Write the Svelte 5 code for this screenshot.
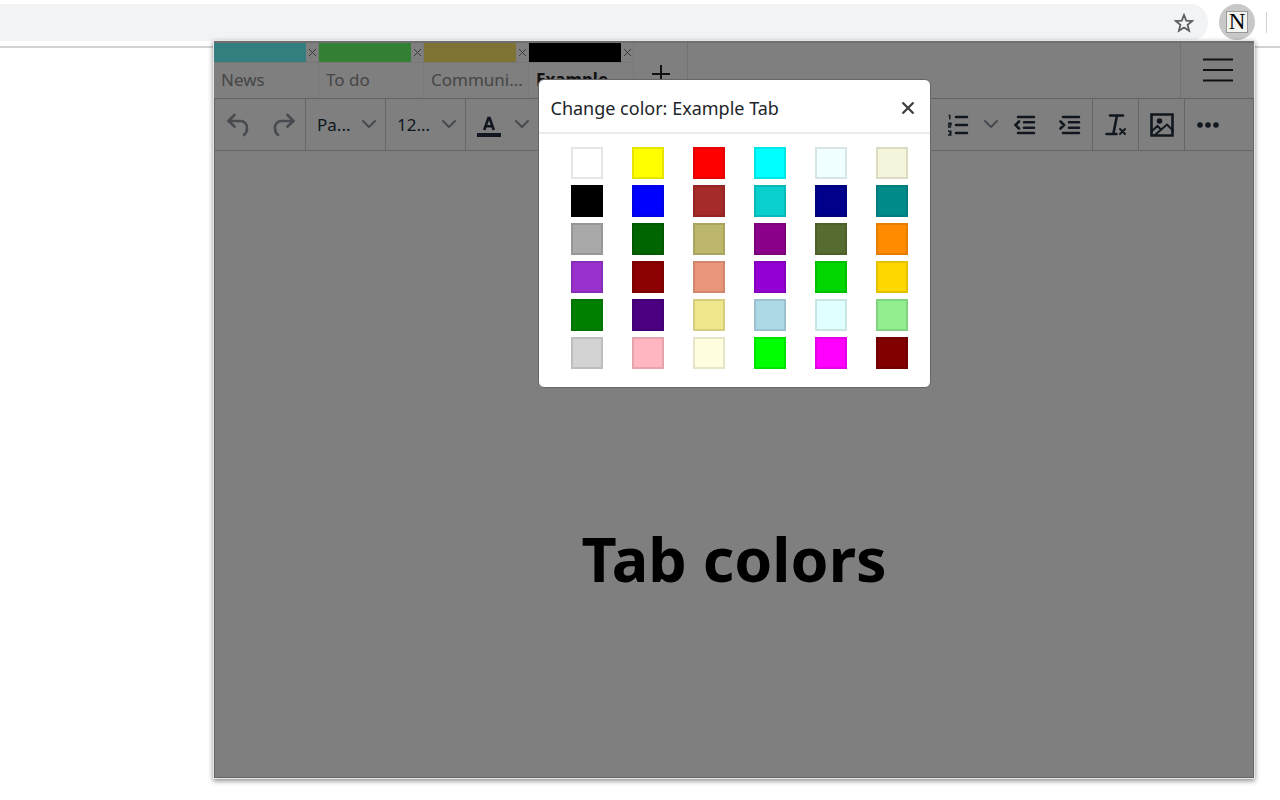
<script>
  let tabs = [
    { name: 'News', color: '#66ffff' },
    { name: 'To do', color: '#66ff66' },
    { name: 'Communi...', color: '#ffe666' },
    { name: 'Example', color: '#000000' }
  ];
  let active = 3;
  let modalOpen = true;

  const colors = [
    'white', 'yellow', 'red', 'cyan', 'azure', 'beige',
    'black', 'blue', 'brown', '#09cfcf', 'darkblue', 'darkcyan',
    'darkgray', 'darkgreen', 'darkkhaki', 'darkmagenta', 'darkolivegreen', 'darkorange',
    'darkorchid', 'darkred', 'darksalmon', 'darkviolet', '#00d600', 'gold',
    'green', 'indigo', 'khaki', 'lightblue', 'lightcyan', 'lightgreen',
    'lightgray', 'lightpink', 'lightyellow', 'lime', 'magenta', 'maroon'
  ];

  function pick(color) {
    tabs[active].color = color;
    modalOpen = false;
  }
</script>

<div class="page">
  <header class="browser">
    <div class="omnibox">
      <input aria-label="Address" type="text" />
      <button class="star" aria-label="Bookmark">
        <svg width="20" height="20" viewBox="0 0 20 20">
          <path d="M10 2l2.200 5.600 6 .4-4.600 3.900 1.500 5.900-5.100-3.300-5.100 3.300 1.500-5.900L1.800 8l6-.4z" fill="none" stroke="#5a5d61" stroke-width="1.800" />
        </svg>
      </button>
    </div>
    <button class="extension"><span>N</span></button>
    <div class="divider"></div>
  </header>

  <main class="popup">
    <nav class="tabs">
      {#each tabs as tab, i}
        <div class="tab" class:active={i === active}>
          <div class="strip">
            <div class="color" style="background: {tab.color}"></div>
            <button class="close" aria-label="Close tab">
              <svg width="9" height="9" viewBox="0 0 9 9"><path d="M1 1l7 7M8 1L1 8" /></svg>
            </button>
          </div>
          <button class="name" on:click={() => (active = i)}>{tab.name}</button>
        </div>
      {/each}
      <button class="add" aria-label="Add tab">
        <svg width="18" height="18" viewBox="0 0 18 18"><path d="M9 0v18M0 9h18" /></svg>
      </button>
      <button class="menu" aria-label="Menu">
        <svg width="30" height="24" viewBox="0 0 30 24"><path d="M0 1.500h30M0 12h30M0 22.500h30" /></svg>
      </button>
    </nav>

    <section class="editor">
      <div class="toolbar">
        <div class="group">
          <button class="tool muted" aria-label="Undo">
            <svg width="24" height="24" viewBox="0 0 24 24">
              <path d="M8.500 2L2.500 8l6 5.500M3 8h11a6.500 6.500 0 0 1 7 7.500q0 4-3 6.500" />
            </svg>
          </button>
          <button class="tool muted" aria-label="Redo">
            <svg width="24" height="24" viewBox="0 0 24 24">
              <path d="M16.500 2l6 6-6 5.500M22 8H11a6.500 6.500 0 0 0-7 7.500q0 4 3 6.500" />
            </svg>
          </button>
        </div>
        <div class="group drop">
          <select aria-label="Block format"><option>Pa...</option></select>
          <svg class="chevron" width="14" height="9" viewBox="0 0 14 9"><path d="M1 1l6 6 6-6" /></svg>
        </div>
        <div class="group drop">
          <select aria-label="Font size"><option>12...</option></select>
          <svg class="chevron" width="14" height="9" viewBox="0 0 14 9"><path d="M1 1l6 6 6-6" /></svg>
        </div>
        <div class="group colors">
          <button class="tool" aria-label="Text color">
            <svg width="24" height="24" viewBox="0 0 24 24">
              <path class="letter" d="M7.200 17L11.400 5h1.200l4.200 12M9 13.300h6" />
              <path class="solid" d="M0 20h24v4H0z" />
            </svg>
          </button>
          <button class="split" aria-label="Text color options">
            <svg class="chevron" width="14" height="9" viewBox="0 0 14 9"><path d="M1 1l6 6 6-6" /></svg>
          </button>
        </div>
        <div class="group lists">
          <button class="split" aria-label="Bullet list options">
            <svg class="chevron" width="14" height="9" viewBox="0 0 14 9"><path d="M1 1l6 6 6-6" /></svg>
          </button>
          <button class="tool" aria-label="Numbered list">
            <svg width="24" height="24" viewBox="0 0 24 24">
              <path class="bars" d="M10 4h11M10 12h11M10 20h11" />
              <path class="digits" d="M2.500 2.500h1.300v4M2 10.300h3v1.700H2.700v2H5.200M2 18.300h2.800v3.700H2M3 20.100h1.500" />
            </svg>
          </button>
          <button class="split" aria-label="Numbered list options">
            <svg class="chevron" width="14" height="9" viewBox="0 0 14 9"><path d="M1 1l6 6 6-6" /></svg>
          </button>
          <button class="tool" aria-label="Decrease indent">
            <svg width="24" height="24" viewBox="0 0 24 24">
              <path class="bars" d="M5 4h16M11 9.300h10M11 14.700h10M5 20h16M6 8.500L2.500 12 6 15.500" />
            </svg>
          </button>
          <button class="tool" aria-label="Increase indent">
            <svg width="24" height="24" viewBox="0 0 24 24">
              <path class="bars" d="M5 4h16M11 9.300h10M11 14.700h10M5 20h16M2.500 8.500L6 12l-3.500 3.500" />
            </svg>
          </button>
        </div>
        <div class="group">
          <button class="tool" aria-label="Clear formatting">
            <svg width="24" height="24" viewBox="0 0 24 24">
              <path class="bars" d="M6 2.500h13M13 2.500L9.500 20M2.500 21h10" />
              <path class="thin" d="M16 16l5 5M21 16l-5 5" />
            </svg>
          </button>
        </div>
        <div class="group">
          <button class="tool" aria-label="Image">
            <svg width="24" height="24" viewBox="0 0 24 24">
              <path class="bars" d="M1.500 1.500h21v21h-21z" />
              <circle class="solid" cx="9.500" cy="8" r="2.800" />
              <path class="thin" d="M2 18l5.500-5 3.500 3.500M5 22L17 11.500l6 6" />
            </svg>
          </button>
        </div>
        <div class="group">
          <button class="tool" aria-label="More">
            <svg width="24" height="24" viewBox="0 0 24 24">
              <circle class="solid" cx="4" cy="12" r="2.800" />
              <circle class="solid" cx="12" cy="12" r="2.800" />
              <circle class="solid" cx="20" cy="12" r="2.800" />
            </svg>
          </button>
        </div>
      </div>
      <h1>Tab colors</h1>
    </section>

    {#if modalOpen}
      <div class="overlay">
        <div class="modal" role="dialog" aria-labelledby="modal-title">
          <div class="modal-header">
            <h2 id="modal-title">Change color: Example Tab</h2>
            <button aria-label="Close" on:click={() => (modalOpen = false)}>
              <svg width="14" height="14" viewBox="0 0 14 14">
                <path d="M1.500 1.500l11 11M12.500 1.500l-11 11" fill="none" stroke="#404040" stroke-width="2.300" />
              </svg>
            </button>
          </div>
          <div class="swatches">
            {#each colors as color}
              <button aria-label={color} style="background-color: {color}" on:click={() => pick(color)}></button>
            {/each}
          </div>
        </div>
      </div>
    {/if}
  </main>
</div>

<style>
  :global(body) {
    background: white;
    font-family: 'Noto Sans', 'Open Sans', sans-serif;
  }

  * {
    box-sizing: border-box;
  }

  button, select, input {
    background: none;
    border: none;
    color: inherit;
    font: inherit;
    margin: 0;
    padding: 0;
  }

  button {
    align-items: center;
    cursor: pointer;
    display: flex;
    justify-content: center;
  }

  svg {
    display: block;
    flex: none;
  }

  .page {
    display: flex;
    flex-direction: column;
    min-height: 100vh;
  }

  .browser {
    align-items: flex-start;
    border-bottom: 2px solid #d2d2d2;
    display: flex;
    height: 48px;
    padding-top: 4px;
  }

  .omnibox {
    align-items: center;
    background: #f1f3f4;
    border-radius: 0 18px 18px 0;
    display: flex;
    flex: 1;
    height: 37px;
    padding-right: 14px;
  }

  .omnibox input {
    flex: 1;
    outline: none;
  }

  .extension {
    background: #c8c8c8;
    border-radius: 50%;
    height: 36px;
    margin: 0 11px;
    width: 36px;
  }

  .extension span {
    background: #f3f4ef;
    border: 1px solid #999;
    color: black;
    font-family: 'Liberation Serif', serif;
    font-size: 23px;
    height: 22px;
    line-height: 20px;
    width: 22px;
  }

  .divider {
    background: #d2d2d2;
    height: 21px;
    margin: 8px 13px 0 0;
    width: 1px;
  }

  .popup {
    border: 1px solid #e6e6e6;
    box-shadow: 0 2px 5px rgba(0, 0, 0, 0.45);
    background: white;
    display: flex;
    flex: 1;
    flex-direction: column;
    margin: -8px 25px 21px 213px;
    position: relative;
  }

  .tabs {
    border-bottom: 1px solid #c4c4c4;
    border-top: 2px solid #dedede;
    color: #222;
    display: flex;
    height: 58px;
  }

  .tab {
    border-right: 1px solid #f0f0f0;
    color: #8c8c8c;
    width: 105px;
  }

  .tab.active {
    color: #222;
    font-weight: bold;
  }

  .strip {
    border-bottom: 1px solid #eee;
    display: flex;
    height: 20px;
  }

  .color {
    flex: 1;
  }

  .close {
    width: 12px;
  }

  .close path {
    fill: none;
    stroke: #777;
    stroke-width: 1;
  }

  .name {
    font-size: 17px;
    height: 33px;
    justify-content: flex-start;
    padding-left: 7px;
    white-space: nowrap;
    width: 100%;
  }

  .add {
    border-right: 1px solid #e4e4e4;
    padding-top: 6px;
    width: 54px;
  }

  .menu {
    border-left: 1px solid #e4e4e4;
    margin-left: auto;
    padding-bottom: 2px;
    width: 74px;
  }

  .add path, .menu path {
    fill: none;
    stroke: #222;
    stroke-width: 2;
  }

  .editor {
    border: 1px solid #ccc;
    border-top: none;
    flex: 1;
  }

  .toolbar {
    border-bottom: 1px solid #ccc;
    color: #222f3e;
    display: flex;
    height: 52px;
  }

  .group {
    border-right: 1px solid #ccc;
    display: flex;
    flex: none;
  }

  .group:last-child {
    border-right: none;
    width: 68px;
  }

  .group.colors {
    border-right: none;
  }

  .group.lists {
    flex: 1;
    justify-content: flex-end;
  }

  .tool {
    width: 45px;
  }

  .tool path, .chevron path {
    fill: none;
    stroke: #222f3e;
    stroke-linecap: round;
    stroke-width: 3;
  }

  .tool .bars, .tool .letter {
    stroke-width: 2.6;
  }

  .tool .letter {
    stroke-linecap: butt;
  }

  .tool .thin {
    stroke-width: 2;
  }

  .tool .digits {
    stroke-linecap: butt;
    stroke-width: 1.4;
  }

  .tool .solid {
    fill: #222f3e;
    stroke: none;
  }

  .tool.muted path {
    stroke: #8f969e;
    stroke-width: 2.6;
  }

  .split {
    width: 22px;
  }

  .chevron path {
    stroke: #8f969e;
    stroke-width: 2;
  }

  .drop {
    align-items: center;
    padding: 0 9px 0 11px;
    width: 80px;
  }

  .drop select {
    appearance: none;
    flex: 1;
    font-size: 17px;
    min-width: 0;
  }

  .editor h1 {
    color: black;
    font-size: 61px;
    line-height: 84px;
    margin: 366px 0 0;
    text-align: center;
  }

  .overlay {
    align-items: flex-start;
    background: rgba(0, 0, 0, 0.5);
    display: flex;
    inset: 0;
    justify-content: center;
    padding-top: 38px;
    position: absolute;
  }

  .modal {
    background: white;
    border: 1px solid #666;
    border-radius: 6px;
    overflow: hidden;
  }

  .modal-header {
    align-items: center;
    border-bottom: 2px solid #e9ecef;
    display: flex;
    height: 54px;
    justify-content: space-between;
    padding: 4px 15px 0 12px;
  }

  .modal h2 {
    color: #212529;
    font-size: 18px;
    font-weight: normal;
    margin: 0;
  }

  .swatches {
    display: grid;
    gap: 6px 29px;
    grid-template-columns: repeat(6, 32px);
    padding: 13px 22px 18px 32px;
  }

  .swatches button {
    border: 2px solid rgba(0, 0, 0, 0.1);
    height: 32px;
  }
</style>
